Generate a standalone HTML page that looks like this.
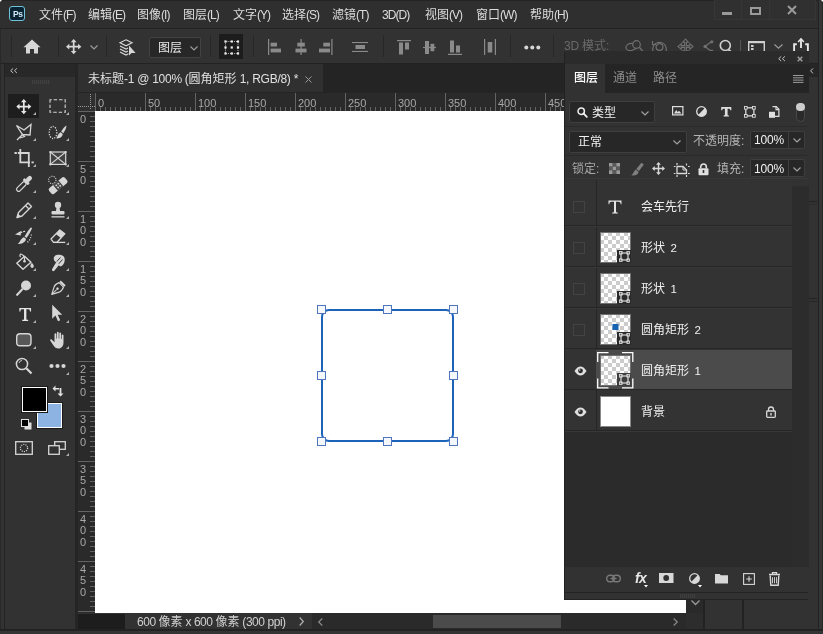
<!DOCTYPE html><html><head><meta charset="utf-8"><title>Photoshop</title><style>*{box-sizing:border-box;margin:0;padding:0}
html,body{width:823px;height:634px;overflow:hidden;background:#282828}
body{font-family:"Liberation Sans","Noto Sans CJK SC",sans-serif;font-size:12px;color:#ddd}
#app{position:relative;width:823px;height:634px;overflow:hidden;background:#282828}
.a{position:absolute}
.t{will-change:transform;position:absolute;height:20px;line-height:20px;white-space:nowrap;font-size:12px;color:#dcdcdc}
.l{letter-spacing:-0.2px}
.menu .l{font-size:12px;letter-spacing:-0.95px}
svg{overflow:visible}
.ic{position:absolute;overflow:visible}
.rl{will-change:transform;font-size:11px;line-height:11px;color:#a8a8a8;letter-spacing:0}
.stl{letter-spacing:-0.45px}
.lyn{word-spacing:2.5px;font-size:11.5px}
.tabl{letter-spacing:-0.27px}
</style></head><body><div id="app"><div class="a" style="left:0px;top:0px;width:823px;height:28px;background:#2f2f2f;"></div>
<div class="a" style="left:0px;top:28px;width:823px;height:1px;background:#222;"></div>
<div class="a" style="left:0px;top:0px;width:823px;height:1px;background:#242424;"></div>
<div class="a" style="left:9px;top:6px;width:16px;height:15px;background:#0b2233;border:1px solid #6fc4dc;border-radius:3px"></div>
<div class="a" style="will-change:transform;left:12.500px;top:7.500px;font-size:8.500px;font-weight:bold;color:#cfeaf8;line-height:12px;letter-spacing:-0.400px">Ps</div>
<div class="t menu" style="left:39px;top:5px;">文件<span class="l">(F)</span></div>
<div class="t menu" style="left:88px;top:5px;">编辑<span class="l">(E)</span></div>
<div class="t menu" style="left:136.5px;top:5px;">图像<span class="l">(I)</span></div>
<div class="t menu" style="left:183px;top:5px;">图层<span class="l">(L)</span></div>
<div class="t menu" style="left:232.5px;top:5px;">文字<span class="l">(Y)</span></div>
<div class="t menu" style="left:282px;top:5px;">选择<span class="l">(S)</span></div>
<div class="t menu" style="left:332px;top:5px;">滤镜<span class="l">(T)</span></div>
<div class="t menu" style="left:382px;top:5px;"><span class="l">3D(D)</span></div>
<div class="t menu" style="left:425px;top:5px;">视图<span class="l">(V)</span></div>
<div class="t menu" style="left:476px;top:5px;">窗口<span class="l">(W)</span></div>
<div class="t menu" style="left:530px;top:5px;">帮助<span class="l">(H)</span></div>
<div class="a" style="left:713.500px;top:-1px;width:102.500px;height:20.500px;background:#303030;border:1px solid #363636"></div>
<div class="a" style="left:740.5px;top:0px;width:1px;height:19px;background:#363636;"></div>
<div class="a" style="left:769px;top:0px;width:1px;height:19px;background:#363636;"></div>
<div class="a" style="left:722px;top:12.3px;width:10px;height:2.7px;background:#9a9a9a;"></div>
<div class="a" style="left:750px;top:7px;width:11px;height:8px;border:2px solid #9a9a9a;border-top-width:2px"></div>
<svg class="ic" style="left:787px;top:5px" width="10" height="10" viewBox="0 0 10 10" ><path d="M1 1L9 9M9 1L1 9" stroke="#9a9a9a" stroke-width="2" fill="none"/></svg>
<div class="a" style="left:0px;top:29px;width:823px;height:34px;background:#323232;"></div>
<div class="a" style="left:0px;top:63px;width:823px;height:1px;background:#222;"></div>
<div class="a" style="left:10.5px;top:35px;width:1px;height:21.5px;background:#272727;"></div>
<div class="a" style="left:58px;top:35px;width:1px;height:21.5px;background:#272727;"></div>
<div class="a" style="left:106px;top:35px;width:1px;height:21.5px;background:#272727;"></div>
<div class="a" style="left:210px;top:35px;width:1px;height:21.5px;background:#272727;"></div>
<div class="a" style="left:253px;top:35px;width:1px;height:21.5px;background:#272727;"></div>
<div class="a" style="left:382.5px;top:35px;width:1px;height:21.5px;background:#272727;"></div>
<div class="a" style="left:510px;top:35px;width:1px;height:21.5px;background:#272727;"></div>
<div class="a" style="left:552.5px;top:35px;width:1px;height:21.5px;background:#272727;"></div>
<svg class="ic" style="left:23px;top:39.3px" width="18" height="15" viewBox="0 0 18 15" ><path d="M9 0.5L0.5 8.2H3V14.5H7V10H11V14.5H15V8.2H17.5Z" fill="#d6d6d6"/></svg>
<svg class="ic" style="left:66px;top:39px" width="15.5" height="15.5" viewBox="0 0 15.5 15.5" ><g transform="scale(0.960)"><path d="M8 0L11 3.4H8.9V7.1H12.6V5L16 8L12.6 11V8.9H8.9V12.6H11L8 16L5 12.6H7.1V8.9H3.4V11L0 8L3.4 5V7.1H7.1V3.4H5Z" fill="#d6d6d6"/></g></svg>
<svg class="ic" style="left:90px;top:45px" width="8" height="5" viewBox="0 0 8 5" ><path d="M0.5 0.5L4 4L7.5 0.5" stroke="#9a9a9a" stroke-width="1.2" fill="none"/></svg>
<svg class="ic" style="left:119px;top:39px" width="17" height="17" viewBox="0 0 17 17" ><path d="M7 0.8L13 3.8L7 6.8L1 3.8Z" fill="none" stroke="#d6d6d6" stroke-width="1.2"/><path d="M1 7L7 10L9 9M1 10L7 13L9 12M1 13L7 16L9.5 14.7" fill="none" stroke="#d6d6d6" stroke-width="1.2"/><path d="M10 6.5V16.5L12.6 14L16.6 14Z" fill="#d6d6d6"/></svg>
<div class="a" style="left:149px;top:37px;width:52px;height:21px;background:#272727;border:1px solid #424242;border-radius:2px"></div>
<div class="t " style="left:157.5px;top:37.5px;color:#e6e6e6">图层</div>
<svg class="ic" style="left:189.5px;top:45.5px" width="8" height="5" viewBox="0 0 8 5" ><path d="M0.5 0.5L4 4L7.5 0.5" stroke="#9a9a9a" stroke-width="1.2" fill="none"/></svg>
<div class="a" style="left:219px;top:33.5px;width:24px;height:25px;background:#1c1c1c;"></div>
<svg class="ic" style="left:223.5px;top:39.5px" width="15.5" height="15" viewBox="0 0 15.5 15" ><rect x="1.500" y="1.500" width="12.500" height="12" fill="none" stroke="#bdbdbd" stroke-width="1" stroke-dasharray="1 1.100"/><rect x="0.4" y="0.4" width="2.200" height="2.200" fill="#ededed"/><rect x="0.4" y="6.4" width="2.200" height="2.200" fill="#ededed"/><rect x="0.4" y="12.4" width="2.200" height="2.200" fill="#ededed"/><rect x="6.65" y="0.4" width="2.200" height="2.200" fill="#ededed"/><rect x="6.65" y="6.4" width="2.200" height="2.200" fill="#ededed"/><rect x="6.65" y="12.4" width="2.200" height="2.200" fill="#ededed"/><rect x="12.9" y="0.4" width="2.200" height="2.200" fill="#ededed"/><rect x="12.9" y="6.4" width="2.200" height="2.200" fill="#ededed"/><rect x="12.9" y="12.4" width="2.200" height="2.200" fill="#ededed"/></svg>
<svg class="ic" style="left:268px;top:38.5px" width="14" height="16" viewBox="0 0 14 16" ><rect x="0" y="0" width="1.2" height="16" fill="#8a8a8a"/><rect x="2.6" y="3.7" width="6.4" height="3.8" fill="#8a8a8a"/><rect x="2.6" y="9.6" width="10.4" height="3.8" fill="#8a8a8a"/></svg>
<svg class="ic" style="left:294.5px;top:38.5px" width="12" height="16" viewBox="0 0 12 16" ><rect x="5.5" y="0" width="1.2" height="16" fill="#8a8a8a"/><rect x="2.3" y="3.7" width="7.5" height="3.8" fill="#8a8a8a"/><rect x="0.5" y="9.6" width="11" height="3.8" fill="#8a8a8a"/></svg>
<svg class="ic" style="left:319px;top:38.5px" width="14" height="16" viewBox="0 0 14 16" ><rect x="12.3" y="0" width="1.2" height="16" fill="#8a8a8a"/><rect x="4.3" y="3.7" width="6.7" height="3.8" fill="#8a8a8a"/><rect x="0" y="9.6" width="11" height="3.8" fill="#8a8a8a"/></svg>
<svg class="ic" style="left:352px;top:42px" width="16" height="10" viewBox="0 0 16 10" ><rect x="0" y="0" width="16" height="1.1" fill="#8a8a8a"/><rect x="0" y="8.9" width="16" height="1.1" fill="#8a8a8a"/><rect x="3.5" y="3" width="9.5" height="4" fill="#8a8a8a"/></svg>
<svg class="ic" style="left:396.5px;top:39.5px" width="14" height="15" viewBox="0 0 14 15" ><rect x="0" y="0" width="14" height="1.2" fill="#8a8a8a"/><rect x="2" y="2.5" width="4" height="12" fill="#8a8a8a"/><rect x="8" y="2.5" width="4" height="7" fill="#8a8a8a"/></svg>
<svg class="ic" style="left:422.5px;top:40.5px" width="13" height="13" viewBox="0 0 13 13" ><rect x="0" y="5.9" width="13" height="1.2" fill="#8a8a8a"/><rect x="2" y="0" width="4" height="13" fill="#8a8a8a"/><rect x="7.5" y="2.8" width="3.8" height="7.4" fill="#8a8a8a"/></svg>
<svg class="ic" style="left:447.5px;top:39.5px" width="14" height="15" viewBox="0 0 14 15" ><rect x="0" y="13.8" width="14" height="1.2" fill="#8a8a8a"/><rect x="2" y="0.5" width="4" height="12" fill="#8a8a8a"/><rect x="8" y="5.5" width="4" height="7" fill="#8a8a8a"/></svg>
<svg class="ic" style="left:483.5px;top:38.5px" width="12" height="16" viewBox="0 0 12 16" ><rect x="0" y="0" width="1.2" height="16" fill="#8a8a8a"/><rect x="10.8" y="0" width="1.2" height="16" fill="#8a8a8a"/><rect x="3.7" y="3" width="4.6" height="10.5" fill="#8a8a8a"/></svg>
<svg class="ic" style="left:524px;top:45px" width="17" height="5" viewBox="0 0 17 5" ><circle cx="2.3" cy="2.5" r="2" fill="#d6d6d6"/><circle cx="8.3" cy="2.5" r="2" fill="#d6d6d6"/><circle cx="14.3" cy="2.5" r="2" fill="#d6d6d6"/></svg>
<div class="t " style="left:564px;top:36px;color:#6a6a6a"><span class="l">3D&nbsp;</span>模式<span class="l">:</span></div>
<svg class="ic" style="left:625px;top:39.5px" width="19" height="13" viewBox="0 0 19 13" ><circle cx="11.500" cy="4.500" r="3.800" fill="none" stroke="#6f6f6f" stroke-width="1.200"/><path d="M14.300 7.300L18 11.500" stroke="#6f6f6f" stroke-width="1.400"/><path d="M8 3.500C3 3 0.500 5.500 1 8C1.500 10.500 5 11.500 8 10C10 9 10.500 8.500 11.500 8.300" fill="none" stroke="#6f6f6f" stroke-width="1.200"/></svg>
<svg class="ic" style="left:651px;top:39px" width="17" height="14" viewBox="0 0 17 14" ><circle cx="8.500" cy="8" r="3.400" fill="none" stroke="#6f6f6f" stroke-width="1.200"/><path d="M1.800 9A6.800 6.800 0 0 1 15.200 9" fill="none" stroke="#6f6f6f" stroke-width="1.200"/><path d="M1.800 9V12.500M15.200 9V12.500" stroke="#6f6f6f" stroke-width="1.200"/><path d="M1.500 2V5.500H5" fill="none" stroke="#6f6f6f" stroke-width="1.200"/></svg>
<svg class="ic" style="left:677.5px;top:38.5px" width="16" height="16" viewBox="0 0 16 16" ><g transform="scale(0.940)"><path d="M8 0L11 3.4H8.9V7.1H12.6V5L16 8L12.6 11V8.9H8.9V12.6H11L8 16L5 12.6H7.1V8.9H3.4V11L0 8L3.4 5V7.1H7.1V3.4H5Z" fill="none" stroke="#6f6f6f" stroke-width="1.200"/></g></svg>
<svg class="ic" style="left:703px;top:39.5px" width="11" height="13" viewBox="0 0 11 13" ><path d="M2 6.500L8.500 1.500M2 6.500L8.500 11.500" stroke="#6f6f6f" stroke-width="1.300" fill="none"/><circle cx="2.200" cy="6.500" r="1.800" fill="#6f6f6f"/><circle cx="8.800" cy="1.800" r="1.600" fill="#6f6f6f"/><circle cx="8.800" cy="11.200" r="1.600" fill="#6f6f6f"/></svg>
<svg class="ic" style="left:718px;top:39px" width="16" height="16" viewBox="0 0 16 16" ><circle cx="7.3" cy="6.5" r="5" fill="none" stroke="#d0d0d0" stroke-width="1.6"/><path d="M10.5 10.5L14 14" stroke="#d0d0d0" stroke-width="1.8"/></svg>
<div class="a" style="left:739.5px;top:40px;width:1px;height:12px;background:#555;"></div>
<svg class="ic" style="left:747.5px;top:40.5px" width="17" height="14" viewBox="0 0 17 14" ><rect x="0.7" y="0.7" width="15.6" height="12.6" fill="none" stroke="#d0d0d0" stroke-width="1.4"/><rect x="0" y="0" width="17" height="2.2" fill="#d0d0d0"/><rect x="3" y="4" width="2.6" height="2" fill="#d0d0d0"/><rect x="3" y="7" width="2.6" height="2" fill="#d0d0d0"/><rect x="3" y="10" width="2.600" height="2" fill="#d0d0d0"/></svg>
<svg class="ic" style="left:773.5px;top:44px" width="9" height="5" viewBox="0 0 9 5" ><path d="M0.5 0.5L4.5 4.2L8.5 0.5" stroke="#9a9a9a" stroke-width="1.2" fill="none"/></svg>
<svg class="ic" style="left:792px;top:37px" width="18" height="16" viewBox="0 0 18 16" ><path d="M4.800 7.300H2.100V15M13.200 7.300H15.900V15.500" fill="none" stroke="#e6e6e6" stroke-width="1.900"/><path d="M9 2.500V11" stroke="#e6e6e6" stroke-width="1.900"/><path d="M6.100 5L9 1.900L11.900 5" fill="none" stroke="#e6e6e6" stroke-width="1.500"/></svg>
<div class="a" style="left:0px;top:64px;width:823px;height:570px;background:#282828;"></div>
<div class="a" style="left:0px;top:29px;width:1px;height:605px;background:#282828;"></div>
<div class="a" style="left:1px;top:64px;width:3px;height:570px;background:#333;"></div>
<div class="a" style="left:4px;top:64px;width:1px;height:570px;background:#222;"></div>
<div class="a" style="left:5px;top:64px;width:70px;height:566px;background:#323232;"></div>
<div class="a" style="left:5px;top:64px;width:70px;height:13px;background:#282828;"></div>
<svg class="ic" style="left:10px;top:68px" width="7.5" height="5.5" viewBox="0 0 7.5 5.5" ><path d="M3.200 0.400L0.700 2.700L3.200 5M6.900 0.400L4.400 2.700L6.900 5" stroke="#c4c4c4" stroke-width="1" fill="none"/></svg>
<div class="a" style="left:32px;top:80px;width:1px;height:4px;background:#424242;"></div>
<div class="a" style="left:34px;top:80px;width:1px;height:4px;background:#424242;"></div>
<div class="a" style="left:36px;top:80px;width:1px;height:4px;background:#424242;"></div>
<div class="a" style="left:38px;top:80px;width:1px;height:4px;background:#424242;"></div>
<div class="a" style="left:40px;top:80px;width:1px;height:4px;background:#424242;"></div>
<div class="a" style="left:42px;top:80px;width:1px;height:4px;background:#424242;"></div>
<div class="a" style="left:44px;top:80px;width:1px;height:4px;background:#424242;"></div>
<div class="a" style="left:46px;top:80px;width:1px;height:4px;background:#424242;"></div>
<div class="a" style="left:48px;top:80px;width:1px;height:4px;background:#424242;"></div>
<div class="a" style="left:8px;top:94px;width:31px;height:24px;background:#1e1e1e;"></div>
<svg class="ic" style="left:13.5px;top:96px" width="20" height="20" viewBox="0 0 20 20" ><g transform="translate(2.300,3.100) scale(0.940)"><path d="M8 0L11 3.4H8.9V7.1H12.6V5L16 8L12.6 11V8.9H8.9V12.6H11L8 16L5 12.6H7.1V8.9H3.4V11L0 8L3.4 5V7.1H7.1V3.4H5Z" fill="#e6e6e6"/></g></svg>
<svg class="ic" style="left:33.1px;top:111.8px" width="3" height="3" viewBox="0 0 3 3" ><path d="M3 0V3H0Z" fill="#b0b0b0"/></svg>
<svg class="ic" style="left:47.5px;top:96px" width="20" height="20" viewBox="0 0 20 20" ><rect x="2" y="3.800" width="15.200" height="12.400" stroke="#d6d6d6" fill="none" stroke-width="1.100" stroke-dasharray="3.400 2" stroke-dashoffset="1.700"/></svg>
<svg class="ic" style="left:66.4px;top:111.8px" width="3" height="3" viewBox="0 0 3 3" ><path d="M3 0V3H0Z" fill="#b0b0b0"/></svg>
<svg class="ic" style="left:13.5px;top:122px" width="20" height="20" viewBox="0 0 20 20" ><path d="M2.5 3.5L10 8L17 2.5L16 13L8.5 12.5Z" stroke="#d6d6d6" fill="none" stroke-width="1.3"/><path d="M8.5 12.5L3 18M8 12L10.5 14.5L6 16" stroke="#d6d6d6" fill="none" stroke-width="1.3"/></svg>
<svg class="ic" style="left:33.1px;top:137.8px" width="3" height="3" viewBox="0 0 3 3" ><path d="M3 0V3H0Z" fill="#b0b0b0"/></svg>
<svg class="ic" style="left:47.5px;top:122px" width="20" height="20" viewBox="0 0 20 20" ><ellipse cx="5" cy="10.500" rx="3.800" ry="6" stroke="#d6d6d6" fill="none" stroke-width="1.300" stroke-dasharray="1.200 1.300"/><path d="M18.500 3.500C16.500 4.500 14.500 7 13.200 9.500L15.300 11.200C17 8.800 18.300 6 18.500 3.500Z" fill="#d6d6d6"/><path d="M12.600 10.200L14.800 12C14.500 15 11.500 17 8 16.300C9.800 14.800 9.500 11.800 12.600 10.200Z" fill="#d6d6d6"/></svg>
<svg class="ic" style="left:66.4px;top:137.8px" width="3" height="3" viewBox="0 0 3 3" ><path d="M3 0V3H0Z" fill="#b0b0b0"/></svg>
<svg class="ic" style="left:13.5px;top:148px" width="20" height="20" viewBox="0 0 20 20" ><path d="M6.300 1V14.300H16M3.800 5H14.800V19" stroke="#d6d6d6" fill="none" stroke-width="1.800"/><path d="M0.500 5H2.800M17.500 14.300H19.800" stroke="#d6d6d6" fill="none" stroke-width="1.800"/></svg>
<svg class="ic" style="left:33.1px;top:163.8px" width="3" height="3" viewBox="0 0 3 3" ><path d="M3 0V3H0Z" fill="#b0b0b0"/></svg>
<svg class="ic" style="left:47.5px;top:148px" width="20" height="20" viewBox="0 0 20 20" ><rect x="2.300" y="4" width="15.400" height="12.400" fill="#424242" stroke="#d6d6d6" stroke-width="1.200"/><path d="M2.300 4L17.700 16.400M17.700 4L2.300 16.400" stroke="#d6d6d6" fill="none" stroke-width="1.100"/><circle cx="2.3" cy="4" r="1.100" fill="#d6d6d6"/><circle cx="2.3" cy="16.4" r="1.100" fill="#d6d6d6"/><circle cx="17.7" cy="4" r="1.100" fill="#d6d6d6"/><circle cx="17.7" cy="16.4" r="1.100" fill="#d6d6d6"/></svg>
<svg class="ic" style="left:66.4px;top:163.8px" width="3" height="3" viewBox="0 0 3 3" ><path d="M3 0V3H0Z" fill="#b0b0b0"/></svg>
<svg class="ic" style="left:13.5px;top:174px" width="20" height="20" viewBox="0 0 20 20" ><g transform="translate(0.300,0.300) rotate(45 10 10) scale(0.930)"><rect x="8" y="8.5" width="4.4" height="12.500" rx="2" stroke="#d6d6d6" fill="none" stroke-width="1.300"/><rect x="6.200" y="5.800" width="8" height="3" rx="0.800" fill="#d6d6d6"/><rect x="7.800" y="-0.500" width="4.800" height="7" rx="2.200" fill="#d6d6d6"/></g></svg>
<svg class="ic" style="left:33.1px;top:189.8px" width="3" height="3" viewBox="0 0 3 3" ><path d="M3 0V3H0Z" fill="#b0b0b0"/></svg>
<svg class="ic" style="left:47.5px;top:174px" width="20" height="20" viewBox="0 0 20 20" ><circle cx="4.300" cy="6" r="3.700" stroke="#d6d6d6" fill="none" stroke-width="1.100" stroke-dasharray="1.100 1.200"/><g transform="translate(-0.800,0.300) rotate(-40 11 11)"><rect x="0.500" y="7.500" width="20.500" height="7.400" rx="2" fill="#d6d6d6"/><rect x="7.300" y="7.500" width="7" height="7.400" fill="#323232"/><rect x="7.900" y="7.500" width="5.800" height="7.400" fill="#4a4a4a"/><circle cx="9.500" cy="9.800" r="0.900" fill="#d6d6d6"/><circle cx="12.200" cy="9.800" r="0.900" fill="#d6d6d6"/><circle cx="9.500" cy="12.600" r="0.900" fill="#d6d6d6"/><circle cx="12.200" cy="12.600" r="0.900" fill="#d6d6d6"/></g></svg>
<svg class="ic" style="left:66.4px;top:189.8px" width="3" height="3" viewBox="0 0 3 3" ><path d="M3 0V3H0Z" fill="#b0b0b0"/></svg>
<svg class="ic" style="left:13.5px;top:200px" width="20" height="20" viewBox="0 0 20 20" ><path d="M3 17.5L4.5 12.5L14 3L17.5 6.5L8 16Z" stroke="#d6d6d6" fill="none" stroke-width="1.4" stroke-linejoin="round"/><path d="M11.5 5.5L15 9" stroke="#d6d6d6" fill="none" stroke-width="1.2"/><path d="M3 17.5L4.2 13.8L6.8 16.4Z" fill="#d6d6d6"/></svg>
<svg class="ic" style="left:33.1px;top:215.8px" width="3" height="3" viewBox="0 0 3 3" ><path d="M3 0V3H0Z" fill="#b0b0b0"/></svg>
<svg class="ic" style="left:47.5px;top:200px" width="20" height="20" viewBox="0 0 20 20" ><circle cx="10" cy="5" r="3.2" fill="#d6d6d6"/><path d="M8.6 6H11.4L12 11H8Z" fill="#d6d6d6"/><rect x="3.5" y="11" width="13" height="3.6" rx="1" fill="#d6d6d6"/><rect x="3.5" y="16.2" width="13" height="1.3" fill="#d6d6d6"/></svg>
<svg class="ic" style="left:66.4px;top:215.8px" width="3" height="3" viewBox="0 0 3 3" ><path d="M3 0V3H0Z" fill="#b0b0b0"/></svg>
<svg class="ic" style="left:13.5px;top:226px" width="20" height="20" viewBox="0 0 20 20" ><path d="M18.200 2L16.800 1.500C14.500 4 12.300 7.500 10.600 10.600L12.400 12C14.600 9 16.800 5.500 18.200 2Z" fill="#d6d6d6"/><path d="M9.900 11.200L11.900 12.800C12.300 15 9 18.500 3.800 17.900C6 16.500 6.500 12.500 9.900 11.200Z" fill="#d6d6d6"/><path d="M1 8.600L6.800 5V9.400Z" fill="#d6d6d6"/><path d="M6.500 7C8 5.600 10 5.200 12 5.600" stroke="#d6d6d6" fill="none" stroke-width="1.200" stroke-dasharray="2 1"/><path d="M17.300 8.500C17 11.500 16 14 13.500 16.200" stroke="#d6d6d6" fill="none" stroke-width="1.200" stroke-dasharray="1.100 1.500"/></svg>
<svg class="ic" style="left:33.1px;top:241.8px" width="3" height="3" viewBox="0 0 3 3" ><path d="M3 0V3H0Z" fill="#b0b0b0"/></svg>
<svg class="ic" style="left:47.5px;top:226px" width="20" height="20" viewBox="0 0 20 20" ><path d="M3 13L11.800 4L16.800 7.800L9 16.300H5.500Z" stroke="#d6d6d6" fill="none" stroke-width="1.300" stroke-linejoin="round"/><path d="M7.800 8L12.800 12L16.800 7.800L11.800 4Z" fill="#d6d6d6"/><path d="M5.500 16.400H17.300" stroke="#d6d6d6" fill="none" stroke-width="1.300"/></svg>
<svg class="ic" style="left:66.4px;top:241.8px" width="3" height="3" viewBox="0 0 3 3" ><path d="M3 0V3H0Z" fill="#b0b0b0"/></svg>
<svg class="ic" style="left:13.5px;top:252px" width="20" height="20" viewBox="0 0 20 20" ><path d="M2.800 11.300L10.500 4.200L17 10.200L9 17.300Z" stroke="#d6d6d6" fill="none" stroke-width="1.400" stroke-linejoin="round"/><path d="M10.500 9C10.800 6 9.500 3 7.500 2.300C6 1.800 5.500 3.500 6.500 5" stroke="#d6d6d6" fill="none" stroke-width="1.200"/><circle cx="10.500" cy="9.200" r="1.300" fill="#d6d6d6"/><path d="M17.800 10.800C19.500 12.500 20.300 14 19.500 15.200C18.700 16.300 17 16 16.500 14.800C16 13.500 17 12 17.800 10.800Z" fill="#d6d6d6"/></svg>
<svg class="ic" style="left:33.1px;top:267.8px" width="3" height="3" viewBox="0 0 3 3" ><path d="M3 0V3H0Z" fill="#b0b0b0"/></svg>
<svg class="ic" style="left:47.5px;top:252px" width="20" height="20" viewBox="0 0 20 20" ><path d="M5.800 7C5.500 4 8 2.600 11.500 2.800C15 3 17 5 16.700 8.200C16.500 11.500 14.800 13.800 12.300 14.500L10.800 13.200L6.300 18.800C5.300 19.800 3.300 18.600 4.200 17L8.300 10C6.800 9.800 5.900 8.500 5.800 7Z" fill="#d6d6d6"/><path d="M8.800 9.500L12.500 5.500M10.800 11.800L14.500 7.500" stroke="#323232" stroke-width="1" fill="none"/></svg>
<svg class="ic" style="left:66.4px;top:267.8px" width="3" height="3" viewBox="0 0 3 3" ><path d="M3 0V3H0Z" fill="#b0b0b0"/></svg>
<svg class="ic" style="left:13.5px;top:278px" width="20" height="20" viewBox="0 0 20 20" ><circle cx="12" cy="7.5" r="5" fill="#d6d6d6"/><path d="M8.5 11L2.5 17.5" stroke="#d6d6d6" stroke-width="2" fill="none"/></svg>
<svg class="ic" style="left:33.1px;top:293.8px" width="3" height="3" viewBox="0 0 3 3" ><path d="M3 0V3H0Z" fill="#b0b0b0"/></svg>
<svg class="ic" style="left:47.5px;top:278px" width="20" height="20" viewBox="0 0 20 20" ><g transform="translate(9.200,11) rotate(225) scale(0.900) translate(-10,-10)"><path d="M10 1.5L6 9C5 11 5 13 6.5 16.5H13.5C15 13 15 11 14 9Z" stroke="#d6d6d6" fill="none" stroke-width="1.3" stroke-linejoin="round"/><path d="M10 2V9" stroke="#d6d6d6" fill="none" stroke-width="1.1"/><circle cx="10" cy="10.5" r="1.4" fill="#d6d6d6"/><rect x="6.2" y="17.3" width="7.6" height="2.2" fill="#d6d6d6"/></g></svg>
<svg class="ic" style="left:66.4px;top:293.8px" width="3" height="3" viewBox="0 0 3 3" ><path d="M3 0V3H0Z" fill="#b0b0b0"/></svg>
<svg class="ic" style="left:13.5px;top:304px" width="20" height="20" viewBox="0 0 20 20" ><path transform="translate(2.200,1.200) scale(0.900)" d="M3.500 3H16.500V7H15.300C15.200 5.300 14.800 4.600 13.500 4.600H11.300V15.200C11.300 16 11.800 16.300 13.300 16.300V17.500H6.700V16.300C8.200 16.300 8.700 16 8.700 15.200V4.600H6.500C5.200 4.600 4.800 5.300 4.700 7H3.500Z" fill="#e6e6e6"/></svg>
<svg class="ic" style="left:33.1px;top:319.800px" width="3" height="3" viewBox="0 0 3 3" ><path d="M3 0V3H0Z" fill="#b0b0b0"/></svg>
<svg class="ic" style="left:47.5px;top:304px" width="20" height="20" viewBox="0 0 20 20" ><path transform="translate(-1.800,-0.800)" d="M6 1.500L6 15.500L9.300 12.300L11.800 18L14 17L11.500 11.500H16Z" fill="#d6d6d6"/></svg>
<svg class="ic" style="left:66.4px;top:319.8px" width="3" height="3" viewBox="0 0 3 3" ><path d="M3 0V3H0Z" fill="#b0b0b0"/></svg>
<svg class="ic" style="left:13.5px;top:330px" width="20" height="20" viewBox="0 0 20 20" ><rect x="2.700" y="3.800" width="14.300" height="12" rx="3.300" fill="#585858" stroke="#d6d6d6" stroke-width="1.4"/></svg>
<svg class="ic" style="left:33.1px;top:345.8px" width="3" height="3" viewBox="0 0 3 3" ><path d="M3 0V3H0Z" fill="#b0b0b0"/></svg>
<svg class="ic" style="left:47.5px;top:330px" width="20" height="20" viewBox="0 0 20 20" ><path d="M6.500 9.500V4.200C6.500 3 8.300 3 8.300 4.200V8.500H8.900V2.700C8.900 1.500 10.700 1.500 10.700 2.700V8.500H11.300V3.400C11.300 2.200 13.100 2.200 13.100 3.400V9H13.700V5.400C13.700 4.200 15.500 4.200 15.500 5.400V12.500C15.500 16 13.500 18.500 10.500 18.500C8 18.500 6.800 17.500 5.500 15.500L2.300 10.800C1.700 9.800 3 8.800 3.900 9.700L6.500 12.300Z" fill="#d6d6d6"/></svg>
<svg class="ic" style="left:66.4px;top:345.8px" width="3" height="3" viewBox="0 0 3 3" ><path d="M3 0V3H0Z" fill="#b0b0b0"/></svg>
<svg class="ic" style="left:13.5px;top:356px" width="20" height="20" viewBox="0 0 20 20" ><circle cx="8" cy="8" r="5.6" stroke="#d6d6d6" fill="none" stroke-width="1.5"/><path d="M12.3 12.3L17.5 17.5" stroke="#d6d6d6" stroke-width="2.2"/><path d="M5 7A3.2 3.2 0 0 1 8 4.5" stroke="#d6d6d6" fill="none" stroke-width="0.9"/></svg>
<svg class="ic" style="left:47.5px;top:356px" width="20" height="20" viewBox="0 0 20 20" ><circle cx="3.500" cy="10" r="2.100" fill="#d6d6d6"/><circle cx="9.500" cy="10" r="2.100" fill="#d6d6d6"/><circle cx="15.500" cy="10" r="2.100" fill="#d6d6d6"/></svg>
<svg class="ic" style="left:66.4px;top:371.8px" width="3" height="3" viewBox="0 0 3 3" ><path d="M3 0V3H0Z" fill="#b0b0b0"/></svg>
<div class="a" style="left:37px;top:403px;width:24.5px;height:24.5px;background:#8db3e2;border:1px solid #fff;outline:1px solid #1a1a1a"></div>
<div class="a" style="left:22px;top:387px;width:24.5px;height:24.5px;background:#000;border:1px solid #fff;outline:1px solid #1a1a1a"></div>
<svg class="ic" style="left:52px;top:385px" width="12" height="12" viewBox="0 0 12 12" ><path d="M3.5 0.5L0.5 3.5L3.5 6.5V4.4H7V3H3.5Z" fill="#e0e0e0"/><path d="M8.5 11.5L5.5 8.5H7.6V3H9.4V8.5H11.5Z" fill="#e0e0e0"/></svg>
<svg class="ic" style="left:21px;top:419px" width="11" height="11" viewBox="0 0 11 11" ><rect x="3.5" y="3.5" width="7" height="7" fill="#e0e0e0"/><rect x="0.5" y="0.5" width="7" height="7" fill="#000" stroke="#e0e0e0" stroke-width="1"/></svg>
<svg class="ic" style="left:15px;top:441px" width="18" height="14" viewBox="0 0 18 14" ><rect x="0.7" y="0.7" width="16.6" height="12.6" fill="none" stroke="#d6d6d6" stroke-width="1.3"/><circle cx="9" cy="7" r="3.6" fill="none" stroke="#d6d6d6" stroke-width="1.2" stroke-dasharray="1.1 1.15"/></svg>
<svg class="ic" style="left:48px;top:441px" width="18" height="14" viewBox="0 0 18 14" ><rect x="6.7" y="0.7" width="10.6" height="7.6" fill="none" stroke="#d6d6d6" stroke-width="1.3"/><rect x="0.7" y="4.7" width="10.6" height="8.6" fill="#323232" stroke="#d6d6d6" stroke-width="1.3"/></svg>
<svg class="ic" style="left:66.3px;top:453px" width="3" height="3" viewBox="0 0 3 3" ><path d="M3 0V3H0Z" fill="#b0b0b0"/></svg>
<div class="a" style="left:78px;top:64px;width:745px;height:29px;background:#242424;"></div>
<div class="a" style="left:78px;top:64px;width:245px;height:29px;background:#303030;"></div>
<div class="t " style="left:88px;top:69px;color:#e0e0e0">未标题<span class="l tabl">-1&nbsp;@&nbsp;100%&nbsp;(</span>圆角矩形<span class="l tabl">&nbsp;1,&nbsp;RGB/8)&nbsp;*</span></div>
<svg class="ic" style="left:305px;top:75.5px" width="7" height="7" viewBox="0 0 7 7" ><path d="M0.5 0.5L6.5 6.5M6.5 0.5L0.5 6.5" stroke="#9a9a9a" stroke-width="1" fill="none"/></svg>
<div class="a" style="left:75px;top:64px;width:3px;height:566px;background:#252525;"></div>
<div class="a" style="left:78px;top:92px;width:625px;height:1px;background:#252525;"></div>
<div class="a" style="left:78px;top:93px;width:625px;height:18px;background:#2a2a2a;"></div>
<div class="a" style="left:78px;top:111px;width:17px;height:502px;background:#2a2a2a;"></div>
<div class="a" style="left:78px;top:93px;width:17px;height:18px;background:#2f2f2f;"></div>
<svg class="ic" style="left:78px;top:93px" width="17" height="18" viewBox="0 0 17 18" ><path d="M12.5 1V17M0 13.500H17" stroke="#999" stroke-width="1" stroke-dasharray="1 1" fill="none"/></svg>
<svg class="ic" style="left:0px;top:0px" width="823" height="634" viewBox="0 0 823 634" ><rect x="95" y="93" width="1" height="18" fill="#646464"/><rect x="100" y="107" width="1" height="4" fill="#646464"/><rect x="105" y="107" width="1" height="4" fill="#646464"/><rect x="110" y="107" width="1" height="4" fill="#646464"/><rect x="115" y="107" width="1" height="4" fill="#646464"/><rect x="120" y="107" width="1" height="4" fill="#646464"/><rect x="125" y="107" width="1" height="4" fill="#646464"/><rect x="130" y="107" width="1" height="4" fill="#646464"/><rect x="135" y="107" width="1" height="4" fill="#646464"/><rect x="140" y="107" width="1" height="4" fill="#646464"/><rect x="145" y="93" width="1" height="18" fill="#646464"/><rect x="150" y="107" width="1" height="4" fill="#646464"/><rect x="155" y="107" width="1" height="4" fill="#646464"/><rect x="160" y="107" width="1" height="4" fill="#646464"/><rect x="165" y="107" width="1" height="4" fill="#646464"/><rect x="170" y="107" width="1" height="4" fill="#646464"/><rect x="175" y="107" width="1" height="4" fill="#646464"/><rect x="180" y="107" width="1" height="4" fill="#646464"/><rect x="185" y="107" width="1" height="4" fill="#646464"/><rect x="190" y="107" width="1" height="4" fill="#646464"/><rect x="195" y="93" width="1" height="18" fill="#646464"/><rect x="200" y="107" width="1" height="4" fill="#646464"/><rect x="205" y="107" width="1" height="4" fill="#646464"/><rect x="210" y="107" width="1" height="4" fill="#646464"/><rect x="215" y="107" width="1" height="4" fill="#646464"/><rect x="220" y="107" width="1" height="4" fill="#646464"/><rect x="225" y="107" width="1" height="4" fill="#646464"/><rect x="230" y="107" width="1" height="4" fill="#646464"/><rect x="235" y="107" width="1" height="4" fill="#646464"/><rect x="240" y="107" width="1" height="4" fill="#646464"/><rect x="245" y="93" width="1" height="18" fill="#646464"/><rect x="250" y="107" width="1" height="4" fill="#646464"/><rect x="255" y="107" width="1" height="4" fill="#646464"/><rect x="260" y="107" width="1" height="4" fill="#646464"/><rect x="265" y="107" width="1" height="4" fill="#646464"/><rect x="270" y="107" width="1" height="4" fill="#646464"/><rect x="275" y="107" width="1" height="4" fill="#646464"/><rect x="280" y="107" width="1" height="4" fill="#646464"/><rect x="285" y="107" width="1" height="4" fill="#646464"/><rect x="290" y="107" width="1" height="4" fill="#646464"/><rect x="295" y="93" width="1" height="18" fill="#646464"/><rect x="300" y="107" width="1" height="4" fill="#646464"/><rect x="305" y="107" width="1" height="4" fill="#646464"/><rect x="310" y="107" width="1" height="4" fill="#646464"/><rect x="315" y="107" width="1" height="4" fill="#646464"/><rect x="320" y="107" width="1" height="4" fill="#646464"/><rect x="325" y="107" width="1" height="4" fill="#646464"/><rect x="330" y="107" width="1" height="4" fill="#646464"/><rect x="335" y="107" width="1" height="4" fill="#646464"/><rect x="340" y="107" width="1" height="4" fill="#646464"/><rect x="345" y="93" width="1" height="18" fill="#646464"/><rect x="350" y="107" width="1" height="4" fill="#646464"/><rect x="355" y="107" width="1" height="4" fill="#646464"/><rect x="360" y="107" width="1" height="4" fill="#646464"/><rect x="365" y="107" width="1" height="4" fill="#646464"/><rect x="370" y="107" width="1" height="4" fill="#646464"/><rect x="375" y="107" width="1" height="4" fill="#646464"/><rect x="380" y="107" width="1" height="4" fill="#646464"/><rect x="385" y="107" width="1" height="4" fill="#646464"/><rect x="390" y="107" width="1" height="4" fill="#646464"/><rect x="395" y="93" width="1" height="18" fill="#646464"/><rect x="400" y="107" width="1" height="4" fill="#646464"/><rect x="405" y="107" width="1" height="4" fill="#646464"/><rect x="410" y="107" width="1" height="4" fill="#646464"/><rect x="415" y="107" width="1" height="4" fill="#646464"/><rect x="420" y="107" width="1" height="4" fill="#646464"/><rect x="425" y="107" width="1" height="4" fill="#646464"/><rect x="430" y="107" width="1" height="4" fill="#646464"/><rect x="435" y="107" width="1" height="4" fill="#646464"/><rect x="440" y="107" width="1" height="4" fill="#646464"/><rect x="445" y="93" width="1" height="18" fill="#646464"/><rect x="450" y="107" width="1" height="4" fill="#646464"/><rect x="455" y="107" width="1" height="4" fill="#646464"/><rect x="460" y="107" width="1" height="4" fill="#646464"/><rect x="465" y="107" width="1" height="4" fill="#646464"/><rect x="470" y="107" width="1" height="4" fill="#646464"/><rect x="475" y="107" width="1" height="4" fill="#646464"/><rect x="480" y="107" width="1" height="4" fill="#646464"/><rect x="485" y="107" width="1" height="4" fill="#646464"/><rect x="490" y="107" width="1" height="4" fill="#646464"/><rect x="495" y="93" width="1" height="18" fill="#646464"/><rect x="500" y="107" width="1" height="4" fill="#646464"/><rect x="505" y="107" width="1" height="4" fill="#646464"/><rect x="510" y="107" width="1" height="4" fill="#646464"/><rect x="515" y="107" width="1" height="4" fill="#646464"/><rect x="520" y="107" width="1" height="4" fill="#646464"/><rect x="525" y="107" width="1" height="4" fill="#646464"/><rect x="530" y="107" width="1" height="4" fill="#646464"/><rect x="535" y="107" width="1" height="4" fill="#646464"/><rect x="540" y="107" width="1" height="4" fill="#646464"/><rect x="545" y="93" width="1" height="18" fill="#646464"/><rect x="550" y="107" width="1" height="4" fill="#646464"/><rect x="555" y="107" width="1" height="4" fill="#646464"/><rect x="560" y="107" width="1" height="4" fill="#646464"/><rect x="565" y="107" width="1" height="4" fill="#646464"/><rect x="570" y="107" width="1" height="4" fill="#646464"/><rect x="575" y="107" width="1" height="4" fill="#646464"/><rect x="580" y="107" width="1" height="4" fill="#646464"/><rect x="585" y="107" width="1" height="4" fill="#646464"/><rect x="590" y="107" width="1" height="4" fill="#646464"/><rect x="78" y="111" width="17" height="1" fill="#646464"/><rect x="90" y="116" width="5" height="1" fill="#646464"/><rect x="90" y="121" width="5" height="1" fill="#646464"/><rect x="90" y="126" width="5" height="1" fill="#646464"/><rect x="90" y="131" width="5" height="1" fill="#646464"/><rect x="90" y="136" width="5" height="1" fill="#646464"/><rect x="90" y="141" width="5" height="1" fill="#646464"/><rect x="90" y="146" width="5" height="1" fill="#646464"/><rect x="90" y="151" width="5" height="1" fill="#646464"/><rect x="90" y="156" width="5" height="1" fill="#646464"/><rect x="78" y="161" width="17" height="1" fill="#646464"/><rect x="90" y="166" width="5" height="1" fill="#646464"/><rect x="90" y="171" width="5" height="1" fill="#646464"/><rect x="90" y="176" width="5" height="1" fill="#646464"/><rect x="90" y="181" width="5" height="1" fill="#646464"/><rect x="90" y="186" width="5" height="1" fill="#646464"/><rect x="90" y="191" width="5" height="1" fill="#646464"/><rect x="90" y="196" width="5" height="1" fill="#646464"/><rect x="90" y="201" width="5" height="1" fill="#646464"/><rect x="90" y="206" width="5" height="1" fill="#646464"/><rect x="78" y="211" width="17" height="1" fill="#646464"/><rect x="90" y="216" width="5" height="1" fill="#646464"/><rect x="90" y="221" width="5" height="1" fill="#646464"/><rect x="90" y="226" width="5" height="1" fill="#646464"/><rect x="90" y="231" width="5" height="1" fill="#646464"/><rect x="90" y="236" width="5" height="1" fill="#646464"/><rect x="90" y="241" width="5" height="1" fill="#646464"/><rect x="90" y="246" width="5" height="1" fill="#646464"/><rect x="90" y="251" width="5" height="1" fill="#646464"/><rect x="90" y="256" width="5" height="1" fill="#646464"/><rect x="78" y="261" width="17" height="1" fill="#646464"/><rect x="90" y="266" width="5" height="1" fill="#646464"/><rect x="90" y="271" width="5" height="1" fill="#646464"/><rect x="90" y="276" width="5" height="1" fill="#646464"/><rect x="90" y="281" width="5" height="1" fill="#646464"/><rect x="90" y="286" width="5" height="1" fill="#646464"/><rect x="90" y="291" width="5" height="1" fill="#646464"/><rect x="90" y="296" width="5" height="1" fill="#646464"/><rect x="90" y="301" width="5" height="1" fill="#646464"/><rect x="90" y="306" width="5" height="1" fill="#646464"/><rect x="78" y="311" width="17" height="1" fill="#646464"/><rect x="90" y="316" width="5" height="1" fill="#646464"/><rect x="90" y="321" width="5" height="1" fill="#646464"/><rect x="90" y="326" width="5" height="1" fill="#646464"/><rect x="90" y="331" width="5" height="1" fill="#646464"/><rect x="90" y="336" width="5" height="1" fill="#646464"/><rect x="90" y="341" width="5" height="1" fill="#646464"/><rect x="90" y="346" width="5" height="1" fill="#646464"/><rect x="90" y="351" width="5" height="1" fill="#646464"/><rect x="90" y="356" width="5" height="1" fill="#646464"/><rect x="78" y="361" width="17" height="1" fill="#646464"/><rect x="90" y="366" width="5" height="1" fill="#646464"/><rect x="90" y="371" width="5" height="1" fill="#646464"/><rect x="90" y="376" width="5" height="1" fill="#646464"/><rect x="90" y="381" width="5" height="1" fill="#646464"/><rect x="90" y="386" width="5" height="1" fill="#646464"/><rect x="90" y="391" width="5" height="1" fill="#646464"/><rect x="90" y="396" width="5" height="1" fill="#646464"/><rect x="90" y="401" width="5" height="1" fill="#646464"/><rect x="90" y="406" width="5" height="1" fill="#646464"/><rect x="78" y="411" width="17" height="1" fill="#646464"/><rect x="90" y="416" width="5" height="1" fill="#646464"/><rect x="90" y="421" width="5" height="1" fill="#646464"/><rect x="90" y="426" width="5" height="1" fill="#646464"/><rect x="90" y="431" width="5" height="1" fill="#646464"/><rect x="90" y="436" width="5" height="1" fill="#646464"/><rect x="90" y="441" width="5" height="1" fill="#646464"/><rect x="90" y="446" width="5" height="1" fill="#646464"/><rect x="90" y="451" width="5" height="1" fill="#646464"/><rect x="90" y="456" width="5" height="1" fill="#646464"/><rect x="78" y="461" width="17" height="1" fill="#646464"/><rect x="90" y="466" width="5" height="1" fill="#646464"/><rect x="90" y="471" width="5" height="1" fill="#646464"/><rect x="90" y="476" width="5" height="1" fill="#646464"/><rect x="90" y="481" width="5" height="1" fill="#646464"/><rect x="90" y="486" width="5" height="1" fill="#646464"/><rect x="90" y="491" width="5" height="1" fill="#646464"/><rect x="90" y="496" width="5" height="1" fill="#646464"/><rect x="90" y="501" width="5" height="1" fill="#646464"/><rect x="90" y="506" width="5" height="1" fill="#646464"/><rect x="78" y="511" width="17" height="1" fill="#646464"/><rect x="90" y="516" width="5" height="1" fill="#646464"/><rect x="90" y="521" width="5" height="1" fill="#646464"/><rect x="90" y="526" width="5" height="1" fill="#646464"/><rect x="90" y="531" width="5" height="1" fill="#646464"/><rect x="90" y="536" width="5" height="1" fill="#646464"/><rect x="90" y="541" width="5" height="1" fill="#646464"/><rect x="90" y="546" width="5" height="1" fill="#646464"/><rect x="90" y="551" width="5" height="1" fill="#646464"/><rect x="90" y="556" width="5" height="1" fill="#646464"/><rect x="78" y="561" width="17" height="1" fill="#646464"/><rect x="90" y="566" width="5" height="1" fill="#646464"/><rect x="90" y="571" width="5" height="1" fill="#646464"/><rect x="90" y="576" width="5" height="1" fill="#646464"/><rect x="90" y="581" width="5" height="1" fill="#646464"/><rect x="90" y="586" width="5" height="1" fill="#646464"/><rect x="90" y="591" width="5" height="1" fill="#646464"/><rect x="90" y="596" width="5" height="1" fill="#646464"/><rect x="90" y="601" width="5" height="1" fill="#646464"/><rect x="90" y="606" width="5" height="1" fill="#646464"/><rect x="78" y="611" width="17" height="1" fill="#646464"/></svg>
<div class="a rl" style="left:98px;top:98px">0</div>
<div class="a rl" style="left:148px;top:98px">50</div>
<div class="a rl" style="left:198px;top:98px">100</div>
<div class="a rl" style="left:248px;top:98px">150</div>
<div class="a rl" style="left:298px;top:98px">200</div>
<div class="a rl" style="left:348px;top:98px">250</div>
<div class="a rl" style="left:398px;top:98px">300</div>
<div class="a rl" style="left:448px;top:98px">350</div>
<div class="a rl" style="left:498px;top:98px">400</div>
<div class="a rl" style="left:548px;top:98px">450</div>
<div class="a rl" style="left:598px;top:98px">500</div>
<div class="a rl" style="left:648px;top:98px">550</div>
<div class="a rl" style="left:79.500px;top:113.8px">0</div>
<div class="a rl" style="left:79.500px;top:163.8px">5</div>
<div class="a rl" style="left:79.500px;top:175.2px">0</div>
<div class="a rl" style="left:79.500px;top:213.8px">1</div>
<div class="a rl" style="left:79.500px;top:225.2px">0</div>
<div class="a rl" style="left:79.500px;top:236.6px">0</div>
<div class="a rl" style="left:79.500px;top:263.8px">1</div>
<div class="a rl" style="left:79.500px;top:275.2px">5</div>
<div class="a rl" style="left:79.500px;top:286.6px">0</div>
<div class="a rl" style="left:79.500px;top:313.8px">2</div>
<div class="a rl" style="left:79.500px;top:325.2px">0</div>
<div class="a rl" style="left:79.500px;top:336.6px">0</div>
<div class="a rl" style="left:79.500px;top:363.8px">2</div>
<div class="a rl" style="left:79.500px;top:375.2px">5</div>
<div class="a rl" style="left:79.500px;top:386.6px">0</div>
<div class="a rl" style="left:79.500px;top:413.8px">3</div>
<div class="a rl" style="left:79.500px;top:425.2px">0</div>
<div class="a rl" style="left:79.500px;top:436.6px">0</div>
<div class="a rl" style="left:79.500px;top:463.8px">3</div>
<div class="a rl" style="left:79.500px;top:475.2px">5</div>
<div class="a rl" style="left:79.500px;top:486.6px">0</div>
<div class="a rl" style="left:79.500px;top:513.8px">4</div>
<div class="a rl" style="left:79.500px;top:525.2px">0</div>
<div class="a rl" style="left:79.500px;top:536.6px">0</div>
<div class="a rl" style="left:79.500px;top:563.8px">4</div>
<div class="a rl" style="left:79.500px;top:575.2px">5</div>
<div class="a rl" style="left:79.500px;top:586.6px">0</div>
<div class="a rl" style="left:79.500px;top:613.8px">5</div>
<div class="a rl" style="left:79.500px;top:625.2px">0</div>
<div class="a rl" style="left:79.500px;top:636.6px">0</div>
<div class="a" style="left:95px;top:111px;width:591px;height:502px;background:#fff;"></div>
<svg class="ic" style="left:310px;top:300px" width="160" height="160" viewBox="0 0 160 160" ><rect x="12" y="10" width="131" height="131" rx="7" fill="none" stroke="#1c63b9" stroke-width="2"/><rect x="7.5" y="5.5" width="8" height="8" fill="#f4f7fc" stroke="#4f76bd" stroke-width="1"/><rect x="7.5" y="71.5" width="8" height="8" fill="#f4f7fc" stroke="#4f76bd" stroke-width="1"/><rect x="7.5" y="137.5" width="8" height="8" fill="#f4f7fc" stroke="#4f76bd" stroke-width="1"/><rect x="73.5" y="5.5" width="8" height="8" fill="#f4f7fc" stroke="#4f76bd" stroke-width="1"/><rect x="73.5" y="137.5" width="8" height="8" fill="#f4f7fc" stroke="#4f76bd" stroke-width="1"/><rect x="139.5" y="5.5" width="8" height="8" fill="#f4f7fc" stroke="#4f76bd" stroke-width="1"/><rect x="139.5" y="71.5" width="8" height="8" fill="#f4f7fc" stroke="#4f76bd" stroke-width="1"/><rect x="139.5" y="137.5" width="8" height="8" fill="#f4f7fc" stroke="#4f76bd" stroke-width="1"/></svg>
<div class="a" style="left:686px;top:93px;width:17px;height:520px;background:#2a2a2a;"></div>
<svg class="ic" style="left:690.5px;top:600px" width="9" height="6" viewBox="0 0 9 6" ><path d="M0.5 0.5L4.5 4.5L8.5 0.5" stroke="#9a9a9a" stroke-width="1.3" fill="none"/></svg>
<div class="a" style="left:78px;top:613px;width:625px;height:16px;background:#323232;"></div>
<div class="a" style="left:78px;top:614px;width:47px;height:15px;background:#1d1d1d;"></div>
<div class="t " style="left:136.5px;top:611.5px;color:#d0d0d0"><span class="l stl">600&nbsp;</span>像素<span class="l stl">&nbsp;x&nbsp;600&nbsp;</span>像素<span class="l stl">&nbsp;(300&nbsp;ppi)</span></div>
<svg class="ic" style="left:299px;top:617px" width="5" height="9" viewBox="0 0 5 9" ><path d="M0.7 0.5L4.3 4.5L0.7 8.5" stroke="#b0b0b0" stroke-width="1.2" fill="none"/></svg>
<div class="a" style="left:312px;top:613px;width:374px;height:16px;background:#2a2a2a;"></div>
<svg class="ic" style="left:318px;top:617.5px" width="5" height="8" viewBox="0 0 5 8" ><path d="M4.3 0.5L0.7 4L4.3 7.5" stroke="#8a8a8a" stroke-width="1.2" fill="none"/></svg>
<svg class="ic" style="left:673px;top:617.5px" width="5" height="8" viewBox="0 0 5 8" ><path d="M0.7 0.5L4.3 4L0.7 7.5" stroke="#8a8a8a" stroke-width="1.2" fill="none"/></svg>
<div class="a" style="left:433px;top:615px;width:128px;height:13px;background:#4b4b4b;"></div>
<div class="a" style="left:686px;top:613px;width:17px;height:16px;background:#2d2d2d;"></div>
<div class="a" style="left:703px;top:64px;width:2px;height:566px;background:#222;"></div>
<div class="a" style="left:705px;top:64px;width:37px;height:566px;background:#323232;"></div>
<div class="a" style="left:742px;top:64px;width:2px;height:566px;background:#222;"></div>
<div class="a" style="left:744px;top:64px;width:74px;height:566px;background:#323232;"></div>
<div class="a" style="left:809px;top:64px;width:9px;height:12.5px;background:#262626;"></div>
<svg class="ic" style="left:809.5px;top:67.8px" width="3.5" height="6" viewBox="0 0 3.5 6" ><path d="M3 0.400L0.600 2.900L3 5.400" stroke="#c8c8c8" stroke-width="1" fill="none"/></svg>
<div class="a" style="left:818px;top:0px;width:1px;height:634px;background:#222;"></div>
<div class="a" style="left:819px;top:0px;width:3px;height:634px;background:#353535;"></div>
<div class="a" style="left:822px;top:0px;width:1px;height:634px;background:#272727;"></div>
<div class="a" style="left:808.5px;top:201px;width:8px;height:1px;background:#222;"></div>
<div class="a" style="left:808.5px;top:204px;width:8px;height:1px;background:#2c2c2c;"></div>
<div class="a" style="left:808.5px;top:298px;width:8px;height:1px;background:#222;"></div>
<div class="a" style="left:808.5px;top:301px;width:8px;height:1px;background:#252525;"></div>
<div class="a" style="left:0px;top:629px;width:823px;height:2px;background:#222;"></div>
<div class="a" style="left:0px;top:631px;width:823px;height:3px;background:#343434;"></div>
<div class="a" style="left:565px;top:51px;width:244px;height:548px;background:#323232;box-shadow:-1px 1px 0 0 #222"></div>
<div class="a" style="left:565px;top:51px;width:244px;height:13px;background:#2b2b2b;"></div>
<svg class="ic" style="left:778.3px;top:56.2px" width="7.5" height="5.5" viewBox="0 0 7.5 5.5" ><path d="M3.200 0.400L0.700 2.700L3.200 5M6.900 0.400L4.400 2.700L6.900 5" stroke="#c4c4c4" stroke-width="1" fill="none"/></svg>
<svg class="ic" style="left:797px;top:56px" width="6" height="6" viewBox="0 0 6 6" ><path d="M0.700 0.700L5.300 5.300M5.300 0.700L0.700 5.300" stroke="#9a9a9a" stroke-width="1.600" fill="none"/></svg>
<div class="a" style="left:565px;top:64px;width:244px;height:29px;background:#252525;"></div>
<div class="a" style="left:565px;top:64px;width:40px;height:30px;background:#323232;"></div>
<div class="t " style="left:574px;top:67.5px;color:#fff;font-weight:500">图层</div>
<div class="t " style="left:613px;top:67.5px;color:#8c8c8c">通道</div>
<div class="t " style="left:653px;top:67.5px;color:#8c8c8c">路径</div>
<svg class="ic" style="left:793px;top:75px" width="10.5" height="8" viewBox="0 0 10.5 8" ><path d="M0 0.500H10.500M0 2.800H10.500M0 5.100H10.500M0 7.400H10.500" stroke="#9c9c9c" stroke-width="1" fill="none"/></svg>
<div class="a" style="left:569px;top:101px;width:86px;height:22px;background:#272727;border:1px solid #3e3e3e;border-radius:2px"></div>
<svg class="ic" style="left:577px;top:107px" width="11" height="11" viewBox="0 0 11 11" ><circle cx="4.200" cy="4.200" r="3.200" fill="none" stroke="#f0f0f0" stroke-width="1.500"/><path d="M6.700 6.700L9.800 9.800" stroke="#f0f0f0" stroke-width="1.900" stroke-linecap="round"/></svg>
<div class="t " style="left:591.5px;top:102.5px;color:#f0f0f0">类型</div>
<svg class="ic" style="left:641px;top:111px" width="8" height="5" viewBox="0 0 8 5" ><path d="M0.5 0.5L4 4L7.5 0.5" stroke="#a0a0a0" stroke-width="1.2" fill="none"/></svg>
<svg class="ic" style="left:671.5px;top:106px" width="11.5" height="9.5" viewBox="0 0 11.5 9.5" ><rect x="0.600" y="0.600" width="10.300" height="8.300" fill="none" stroke="#dedede" stroke-width="1.200"/><path d="M2 7.500L4.300 4L5.800 6.200L7 4.800L9.500 7.500Z" fill="#dedede"/></svg>
<svg class="ic" style="left:696px;top:106px" width="11" height="11" viewBox="0 0 11 11" ><circle cx="5.500" cy="5.500" r="4.800" fill="none" stroke="#dedede" stroke-width="1.300"/><path d="M8.900 2.100A4.800 4.800 0 0 1 2.100 8.900Z" fill="#dedede"/></svg>
<svg class="ic" style="left:720.8px;top:106.5px" width="10.5" height="9.5" viewBox="0 0 10.5 9.5" ><path d="M0.200 0H10.300V3.300H9.200C9.100 2 8.800 1.700 7.800 1.700H6.600V7.600C6.600 8.300 6.900 8.400 7.900 8.400V9.500H2.600V8.400C3.600 8.400 3.900 8.300 3.900 7.600V1.700H2.700C1.700 1.700 1.400 2 1.300 3.300H0.200Z" fill="#dedede"/></svg>
<svg class="ic" style="left:744px;top:105.5px" width="11.7" height="11.7" viewBox="0 0 11.7 11.7" ><g transform="scale(0.900)"><rect x="2" y="2" width="9" height="9" fill="none" stroke="#dedede" stroke-width="1.400"/><rect x="0.500" y="0.500" width="3" height="3" fill="#323232" stroke="#dedede" stroke-width="1"/><rect x="9.500" y="0.500" width="3" height="3" fill="#323232" stroke="#dedede" stroke-width="1"/><rect x="0.500" y="9.500" width="3" height="3" fill="#323232" stroke="#dedede" stroke-width="1"/><rect x="9.500" y="9.500" width="3" height="3" fill="#323232" stroke="#dedede" stroke-width="1"/></g></svg>
<svg class="ic" style="left:768.8px;top:106px" width="10.5" height="12" viewBox="0 0 10.5 12" ><path d="M3.500 0.600H7.300L9.900 3.300V10.300H6" fill="none" stroke="#dedede" stroke-width="1.200"/><path d="M7 0.600V3.600H9.900" fill="none" stroke="#dedede" stroke-width="1.100"/><rect x="0" y="5.800" width="6" height="6" fill="#dedede"/></svg>
<div class="a" style="left:795.500px;top:102.500px;width:9.500px;height:19px;border-radius:5px;background:#2a2a2a;border:1px solid #484848"></div>
<div class="a" style="left:796px;top:102.500px;width:8.500px;height:8.500px;border-radius:5px;background:#cdcdcd"></div>
<div class="a" style="left:565px;top:126px;width:243px;height:1px;background:#2a2a2a;"></div>
<div class="a" style="left:569px;top:131px;width:118px;height:22px;background:#272727;border:1px solid #3e3e3e;border-radius:2px"></div>
<div class="t " style="left:578px;top:131.5px;color:#f0f0f0">正常</div>
<svg class="ic" style="left:673px;top:140px" width="8" height="5" viewBox="0 0 8 5" ><path d="M0.5 0.5L4 4L7.5 0.5" stroke="#a0a0a0" stroke-width="1.2" fill="none"/></svg>
<div class="t " style="left:693px;top:130.5px;color:#b4b4b4">不透明度<span class="l">:</span></div>
<div class="a" style="left:750px;top:130.5px;width:55px;height:18px;background:#272727;border:1px solid #3e3e3e;border-radius:2px"></div>
<div class="a" style="left:788px;top:131.5px;width:1px;height:16px;background:#3e3e3e;"></div>
<div class="t " style="left:754px;top:130px;color:#f0f0f0"><span class="l">100%</span></div>
<svg class="ic" style="left:792.5px;top:138px" width="8" height="5" viewBox="0 0 8 5" ><path d="M0.5 0.5L4 4L7.5 0.5" stroke="#a0a0a0" stroke-width="1.2" fill="none"/></svg>
<div class="a" style="left:565px;top:155px;width:243px;height:1px;background:#2a2a2a;"></div>
<div class="t " style="left:572px;top:158.5px;color:#a8a8a8">锁定<span class="l">:</span></div>
<svg class="ic" style="left:609px;top:163px" width="11" height="11" viewBox="0 0 11 11" ><rect x="0" y="0" width="3.67" height="3.67" fill="#9a9a9a"/><rect x="3.67" y="0" width="3.67" height="3.67" fill="#5a5a5a"/><rect x="7.34" y="0" width="3.67" height="3.67" fill="#9a9a9a"/><rect x="0" y="3.67" width="3.67" height="3.67" fill="#5a5a5a"/><rect x="3.67" y="3.67" width="3.67" height="3.67" fill="#9a9a9a"/><rect x="7.34" y="3.67" width="3.67" height="3.67" fill="#5a5a5a"/><rect x="0" y="7.34" width="3.67" height="3.67" fill="#9a9a9a"/><rect x="3.67" y="7.34" width="3.67" height="3.67" fill="#5a5a5a"/><rect x="7.34" y="7.34" width="3.67" height="3.67" fill="#9a9a9a"/></svg>
<svg class="ic" style="left:631px;top:162px" width="13" height="14" viewBox="0 0 13 14" ><path d="M10.5 0.800L12.800 2.600L8 9L5.300 7Z" fill="#808080"/><path d="M4.700 7.600L7.500 9.700C7.500 12 5 14 0.500 13.500C2.500 12 2.500 9.500 4.700 7.600Z" fill="#808080"/></svg>
<svg class="ic" style="left:652px;top:162px" width="13" height="13" viewBox="0 0 13 13" ><g transform="scale(0.8125)"><path d="M8 0L11 3.4H8.9V7.1H12.6V5L16 8L12.6 11V8.9H8.9V12.6H11L8 16L5 12.6H7.1V8.9H3.4V11L0 8L3.4 5V7.1H7.1V3.4H5Z" fill="#d8d8d8"/></g></svg>
<svg class="ic" style="left:673px;top:162px" width="18" height="16" viewBox="0 0 18 16" ><path d="M4 4.500H10L13.500 8V11.500H4Z" fill="none" stroke="#d8d8d8" stroke-width="1.300"/><path d="M10 4.500V8H13.500" fill="none" stroke="#d8d8d8" stroke-width="1"/><path d="M4 1V3M0.800 4.500H2.500M4 13V15M0.800 11.500H2.500M13.500 13V15M15 11.500H16.800M13.500 1.500V3.500M15 4.500H16.800" stroke="#d8d8d8" stroke-width="1.200" fill="none"/></svg>
<svg class="ic" style="left:698px;top:161.5px" width="11" height="13" viewBox="0 0 11 13" ><rect x="0.5" y="6.300" width="10" height="7" rx="1" fill="#e0e0e0"/><path d="M2.700 6.300V4.800A2.800 2.800 0 0 1 8.300 4.800V6.300" fill="none" stroke="#e0e0e0" stroke-width="1.600"/><rect x="4.700" y="8" width="1.600" height="3" fill="#323232"/></svg>
<div class="t " style="left:717px;top:158.5px;color:#b4b4b4">填充<span class="l">:</span></div>
<div class="a" style="left:750px;top:159px;width:55px;height:18px;background:#272727;border:1px solid #3e3e3e;border-radius:2px"></div>
<div class="a" style="left:788px;top:160px;width:1px;height:16px;background:#3e3e3e;"></div>
<div class="t " style="left:754px;top:158.5px;color:#f0f0f0"><span class="l">100%</span></div>
<svg class="ic" style="left:792.5px;top:166.5px" width="8" height="5" viewBox="0 0 8 5" ><path d="M0.5 0.5L4 4L7.5 0.5" stroke="#a0a0a0" stroke-width="1.2" fill="none"/></svg>
<div class="a" style="left:565px;top:186px;width:243px;height:381px;background:#2b2b2b;"></div>
<div class="a" style="left:565px;top:180px;width:227px;height:250px;background:#333;"></div>
<div class="a" style="left:792px;top:186px;width:17px;height:381px;background:#2c2c2c;"></div>
<div class="a" style="left:565px;top:178px;width:244px;height:1px;background:#393939;"></div>
<svg width="0" height="0" style="position:absolute"><defs><pattern id="chk" width="8" height="8" patternUnits="userSpaceOnUse"><rect width="8" height="8" fill="#fff"/><rect width="4" height="4" fill="#ccc"/><rect x="4" y="4" width="4" height="4" fill="#ccc"/></pattern></defs></svg>
<div class="a" style="left:595.5px;top:180px;width:1px;height:250px;background:#262626;"></div>
<div class="a" style="left:565px;top:225px;width:227px;height:1px;background:#262626;"></div>
<div class="a" style="left:565px;top:226px;width:227px;height:1px;background:#383838;"></div>
<div class="a" style="left:573px;top:200.9px;width:12px;height:12px;border:1px solid #434343"></div>
<svg class="ic" style="left:608px;top:200.1px" width="14" height="14" viewBox="0 0 14 14" ><path d="M0.500 0.500H13.500V4.200H12.700C12.500 2.400 12 1.700 10.500 1.700H8V11.600C8 12.400 8.400 12.600 9.900 12.700V13.500H4.100V12.700C5.600 12.600 6 12.400 6 11.600V1.700H3.500C2 1.700 1.500 2.400 1.300 4.200H0.500Z" fill="#e4e4e4"/></svg>
<div class="t " style="left:640.5px;top:196.7px;color:#f0f0f0">会车先行</div>
<div class="a" style="left:565px;top:266px;width:227px;height:1px;background:#262626;"></div>
<div class="a" style="left:565px;top:267px;width:227px;height:1px;background:#383838;"></div>
<div class="a" style="left:573px;top:241.9px;width:12px;height:12px;border:1px solid #434343"></div>
<svg class="ic" style="left:599.5px;top:231.7px" width="31" height="31" viewBox="0 0 31 31" ><rect x="0" y="0" width="31" height="31" fill="url(#chk)"/><rect x="0.500" y="0.500" width="30" height="30" fill="none" stroke="#707070" stroke-width="1"/></svg>
<div class="a" style="left:616.5px;top:249.5px;width:14px;height:13px;background:#2a2a2a;"></div>
<svg class="ic" style="left:618.5px;top:251px" width="11" height="11" viewBox="0 0 11 11" ><rect x="2" y="2" width="7" height="7" fill="none" stroke="#e8e8e8" stroke-width="1.100"/><rect x="0.5" y="0.5" width="2.600" height="2.600" fill="none" stroke="#e8e8e8" stroke-width="0.800"/><rect x="0.5" y="7.9" width="2.600" height="2.600" fill="none" stroke="#e8e8e8" stroke-width="0.800"/><rect x="7.9" y="0.5" width="2.600" height="2.600" fill="none" stroke="#e8e8e8" stroke-width="0.800"/><rect x="7.9" y="7.9" width="2.600" height="2.600" fill="none" stroke="#e8e8e8" stroke-width="0.800"/></svg>
<div class="t " style="left:640.5px;top:237.7px;color:#f0f0f0">形状<span class="l lyn">&nbsp;2</span></div>
<div class="a" style="left:565px;top:307px;width:227px;height:1px;background:#262626;"></div>
<div class="a" style="left:565px;top:308px;width:227px;height:1px;background:#383838;"></div>
<div class="a" style="left:573px;top:282.9px;width:12px;height:12px;border:1px solid #434343"></div>
<svg class="ic" style="left:599.5px;top:272.7px" width="31" height="31" viewBox="0 0 31 31" ><rect x="0" y="0" width="31" height="31" fill="url(#chk)"/><rect x="0.500" y="0.500" width="30" height="30" fill="none" stroke="#707070" stroke-width="1"/></svg>
<div class="a" style="left:616.5px;top:290.5px;width:14px;height:13px;background:#2a2a2a;"></div>
<svg class="ic" style="left:618.5px;top:292px" width="11" height="11" viewBox="0 0 11 11" ><rect x="2" y="2" width="7" height="7" fill="none" stroke="#e8e8e8" stroke-width="1.100"/><rect x="0.5" y="0.5" width="2.600" height="2.600" fill="none" stroke="#e8e8e8" stroke-width="0.800"/><rect x="0.5" y="7.9" width="2.600" height="2.600" fill="none" stroke="#e8e8e8" stroke-width="0.800"/><rect x="7.9" y="0.5" width="2.600" height="2.600" fill="none" stroke="#e8e8e8" stroke-width="0.800"/><rect x="7.9" y="7.9" width="2.600" height="2.600" fill="none" stroke="#e8e8e8" stroke-width="0.800"/></svg>
<div class="t " style="left:640.5px;top:278.7px;color:#f0f0f0">形状<span class="l lyn">&nbsp;1</span></div>
<div class="a" style="left:565px;top:348px;width:227px;height:1px;background:#262626;"></div>
<div class="a" style="left:573px;top:323.9px;width:12px;height:12px;border:1px solid #434343"></div>
<svg class="ic" style="left:599.5px;top:313.7px" width="31" height="31" viewBox="0 0 31 31" ><rect x="0" y="0" width="31" height="31" fill="url(#chk)"/><rect x="0.500" y="0.500" width="30" height="30" fill="none" stroke="#707070" stroke-width="1"/><rect x="12.500" y="10" width="6" height="6" fill="#1763b3"/></svg>
<div class="a" style="left:616.5px;top:331.5px;width:14px;height:13px;background:#2a2a2a;"></div>
<svg class="ic" style="left:618.5px;top:333px" width="11" height="11" viewBox="0 0 11 11" ><rect x="2" y="2" width="7" height="7" fill="none" stroke="#e8e8e8" stroke-width="1.100"/><rect x="0.5" y="0.5" width="2.600" height="2.600" fill="none" stroke="#e8e8e8" stroke-width="0.800"/><rect x="0.5" y="7.9" width="2.600" height="2.600" fill="none" stroke="#e8e8e8" stroke-width="0.800"/><rect x="7.9" y="0.5" width="2.600" height="2.600" fill="none" stroke="#e8e8e8" stroke-width="0.800"/><rect x="7.9" y="7.9" width="2.600" height="2.600" fill="none" stroke="#e8e8e8" stroke-width="0.800"/></svg>
<div class="t " style="left:640.5px;top:319.7px;color:#f0f0f0">圆角矩形<span class="l lyn">&nbsp;2</span></div>
<div class="a" style="left:596px;top:349.5px;width:196px;height:40px;background:#4b4b4b;"></div>
<div class="a" style="left:565px;top:389px;width:227px;height:1px;background:#262626;"></div>
<svg class="ic" style="left:574px;top:366.3px" width="13" height="10" viewBox="0 0 13 10" ><path d="M0.500 5C2.500 1.800 4.500 0.500 6.500 0.500C8.500 0.500 10.500 1.800 12.500 5C10.500 8.200 8.500 9.500 6.500 9.500C4.500 9.500 2.500 8.200 0.500 5Z" fill="#e0e0e0"/><circle cx="6.500" cy="4.800" r="2.400" fill="#2a2a2a"/><circle cx="5.700" cy="4" r="0.800" fill="#e0e0e0"/></svg>
<svg class="ic" style="left:596.8px;top:351.8px" width="36.5" height="36.5" viewBox="0 0 36.5 36.5" ><path d="M0.700 10V0.700H11.500M25 0.700H35.800V10M35.800 26.500V35.800H25M11.500 35.800H0.700V26.500" fill="none" stroke="#fff" stroke-width="1.300"/></svg>
<svg class="ic" style="left:599.5px;top:354.7px" width="31" height="31" viewBox="0 0 31 31" ><rect x="0" y="0" width="31" height="31" fill="url(#chk)"/><rect x="0.500" y="0.500" width="30" height="30" fill="none" stroke="#707070" stroke-width="1"/></svg>
<div class="a" style="left:616.5px;top:372.5px;width:14px;height:13px;background:#3e3e3e;"></div>
<svg class="ic" style="left:618.5px;top:374px" width="11" height="11" viewBox="0 0 11 11" ><rect x="2" y="2" width="7" height="7" fill="none" stroke="#e8e8e8" stroke-width="1.100"/><rect x="0.5" y="0.5" width="2.600" height="2.600" fill="none" stroke="#e8e8e8" stroke-width="0.800"/><rect x="0.5" y="7.9" width="2.600" height="2.600" fill="none" stroke="#e8e8e8" stroke-width="0.800"/><rect x="7.9" y="0.5" width="2.600" height="2.600" fill="none" stroke="#e8e8e8" stroke-width="0.800"/><rect x="7.9" y="7.9" width="2.600" height="2.600" fill="none" stroke="#e8e8e8" stroke-width="0.800"/></svg>
<div class="t " style="left:640.5px;top:360.7px;color:#f0f0f0">圆角矩形<span class="l lyn">&nbsp;1</span></div>
<div class="a" style="left:565px;top:430px;width:227px;height:1px;background:#262626;"></div>
<div class="a" style="left:565px;top:431px;width:227px;height:1px;background:#383838;"></div>
<svg class="ic" style="left:574px;top:407.3px" width="13" height="10" viewBox="0 0 13 10" ><path d="M0.500 5C2.500 1.800 4.500 0.500 6.500 0.500C8.500 0.500 10.500 1.800 12.500 5C10.500 8.200 8.500 9.500 6.500 9.500C4.500 9.500 2.500 8.200 0.500 5Z" fill="#e0e0e0"/><circle cx="6.500" cy="4.800" r="2.400" fill="#2a2a2a"/><circle cx="5.700" cy="4" r="0.800" fill="#e0e0e0"/></svg>
<div class="a" style="left:599.5px;top:395.7px;width:31px;height:31px;background:#fff;border:1px solid #888"></div>
<div class="t " style="left:640.5px;top:401.7px;color:#f0f0f0">背景</div>
<svg class="ic" style="left:766px;top:405.5px" width="10" height="12" viewBox="0 0 10 12" ><rect x="0.700" y="5" width="8.600" height="6.300" rx="0.800" fill="none" stroke="#d8d8d8" stroke-width="1.300"/><path d="M2.500 5V3.500A2.500 2.500 0 0 1 7.500 3.500V5" fill="none" stroke="#d8d8d8" stroke-width="1.300"/><rect x="4.300" y="7" width="1.400" height="2.500" fill="#d8d8d8"/></svg>
<div class="a" style="left:565px;top:567px;width:243px;height:25px;background:#323232;"></div>
<div class="a" style="left:565px;top:592px;width:243px;height:1px;background:#222;"></div>
<div class="a" style="left:680px;top:594px;width:1px;height:4px;background:#404040;"></div>
<div class="a" style="left:682px;top:594px;width:1px;height:4px;background:#404040;"></div>
<div class="a" style="left:684px;top:594px;width:1px;height:4px;background:#404040;"></div>
<div class="a" style="left:686px;top:594px;width:1px;height:4px;background:#404040;"></div>
<div class="a" style="left:688px;top:594px;width:1px;height:4px;background:#404040;"></div>
<div class="a" style="left:690px;top:594px;width:1px;height:4px;background:#404040;"></div>
<div class="a" style="left:692px;top:594px;width:1px;height:4px;background:#404040;"></div>
<div class="a" style="left:694px;top:594px;width:1px;height:4px;background:#404040;"></div>
<svg class="ic" style="left:606px;top:573.5px" width="15" height="9" viewBox="0 0 15 9" ><rect x="0.700" y="1.200" width="7.600" height="6.600" rx="3.300" fill="none" stroke="#7a7a7a" stroke-width="1.400"/><rect x="6.700" y="1.200" width="7.600" height="6.600" rx="3.300" fill="none" stroke="#7a7a7a" stroke-width="1.400"/><rect x="4.500" y="3.800" width="6" height="1.400" fill="#7a7a7a"/></svg>
<div class="a" style="left:634.5px;top:569px;will-change:transform;font-style:italic;font-weight:bold;font-size:14px;line-height:18px;color:#e6e6e6;letter-spacing:-0.600px">fx</div>
<svg class="ic" style="left:644px;top:584.8px" width="4" height="3" viewBox="0 0 4 3" ><path d="M0 0H4L2 2.500Z" fill="#fff"/></svg>
<svg class="ic" style="left:659px;top:573px" width="14.5" height="10" viewBox="0 0 14.5 10" ><rect x="0" y="0" width="14.500" height="10" fill="#d8d8d8"/><circle cx="7.200" cy="5" r="2.900" fill="#323232"/></svg>
<svg class="ic" style="left:688.7px;top:573.2px" width="11" height="11" viewBox="0 0 11 11" ><circle cx="5.500" cy="5.500" r="4.800" fill="none" stroke="#d8d8d8" stroke-width="1.300"/><path d="M8.900 2.100A4.800 4.800 0 0 1 2.100 8.900Z" fill="#d8d8d8"/></svg>
<svg class="ic" style="left:698px;top:584.8px" width="4" height="3" viewBox="0 0 4 3" ><path d="M0 0H4L2 2.500Z" fill="#fff"/></svg>
<svg class="ic" style="left:714.5px;top:573.5px" width="13" height="9.5" viewBox="0 0 13 9.5" ><path d="M0 0H4.600L5.800 1.300H13V9.500H0Z" fill="#d8d8d8"/></svg>
<svg class="ic" style="left:742.5px;top:572.5px" width="12" height="12" viewBox="0 0 12 12" ><rect x="0.600" y="0.600" width="10.800" height="10.800" fill="none" stroke="#d8d8d8" stroke-width="1.100"/><path d="M6 3.200V8.800M3.200 6H8.800" stroke="#d8d8d8" stroke-width="1.100"/></svg>
<svg class="ic" style="left:769px;top:571.5px" width="11" height="14" viewBox="0 0 11 14" ><path d="M0 2.500H11M3.500 2.500V0.700H7.500V2.500" fill="none" stroke="#d8d8d8" stroke-width="1.300"/><path d="M1.200 3.500L1.800 13.300H9.200L9.800 3.500" fill="none" stroke="#d8d8d8" stroke-width="1.400"/><path d="M3.500 5.200V11.300M5.500 5.200V11.300M7.500 5.200V11.300" stroke="#d8d8d8" stroke-width="0.900"/></svg>
<svg class="ic" style="left:0px;top:0px" width="3" height="3" viewBox="0 0 3 3" ><path d="M0 0H2L0 2Z" fill="#fff"/></svg>
<svg class="ic" style="left:820px;top:0px" width="3" height="3" viewBox="0 0 3 3" ><path d="M3 0H1L3 2Z" fill="#fff"/></svg></div></body></html>
